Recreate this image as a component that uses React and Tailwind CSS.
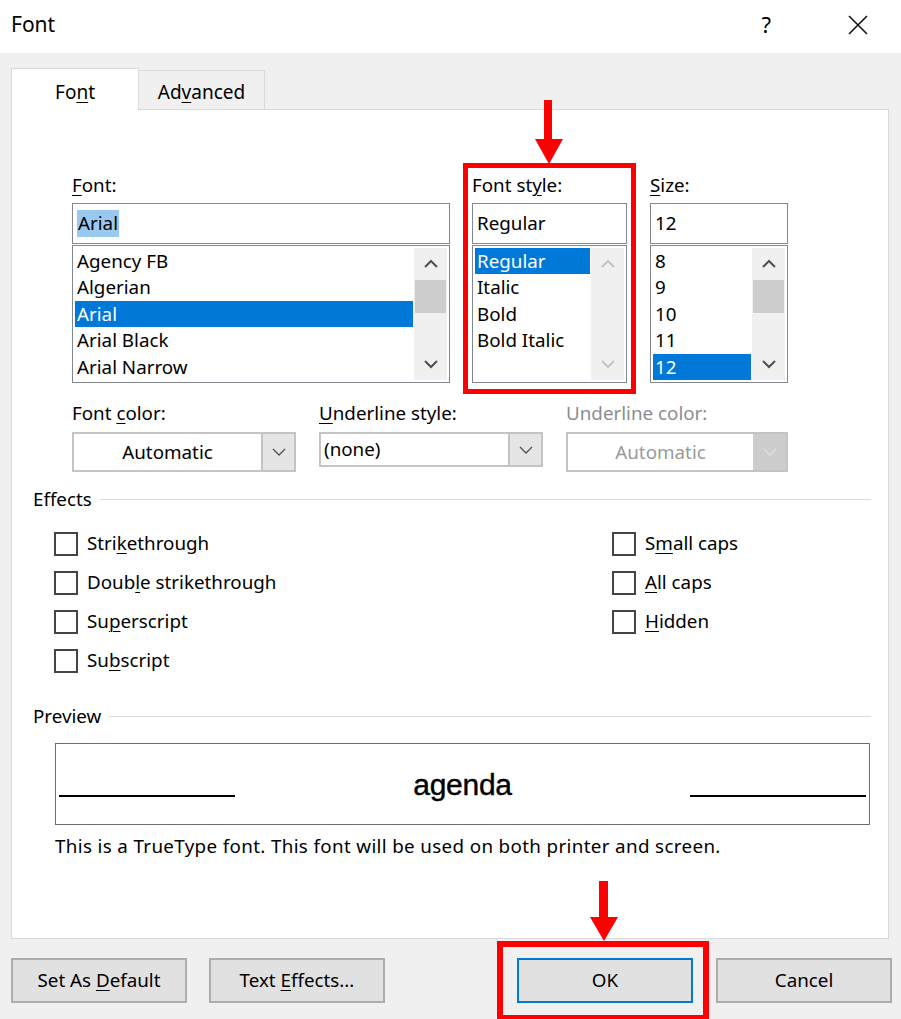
import React from "react";

const U = ({ children }) => (
  <span className="underline decoration-1 underline-offset-[3px]">{children}</span>
);

const ChevUp = ({ color = "#606060" }) => (
  <svg width="16" height="10" viewBox="0 0 16 10">
    <path d="M2 8 L8 2 L14 8" fill="none" stroke={color} strokeWidth="2" />
  </svg>
);
const ChevDown = ({ color = "#606060" }) => (
  <svg width="16" height="10" viewBox="0 0 16 10">
    <path d="M2 2 L8 8 L14 2" fill="none" stroke={color} strokeWidth="2" />
  </svg>
);
const SmallChev = ({ color = "#505050" }) => (
  <svg width="14" height="8" viewBox="0 0 14 8">
    <path d="M1 1 L7 7 L13 1" fill="none" stroke={color} strokeWidth="1.3" />
  </svg>
);

function ListBox({ width, items, selected, disabled, thumb }) {
  return (
    <div
      className="mt-[1px] h-[138px] border border-[#828790] bg-white p-[2px] flex"
      style={{ width }}
    >
      <div className="flex-1 flex flex-col">
        {items.map((it, i) => (
          <div
            key={it}
            className={
              "h-[26.4px] leading-[26px] pl-[2px] " +
              (i === selected ? "bg-[#0078d7] text-white" : "text-black")
            }
          >
            {it}
          </div>
        ))}
      </div>
      <div className="w-[33px] ml-[1px] bg-[#f0f0f0] flex flex-col">
        <div className="h-[32px] flex items-center justify-center">
          <ChevUp color={disabled ? "#c4c4c4" : "#505050"} />
        </div>
        {thumb && <div className="h-[33px] mx-[1px] bg-[#cdcdcd]" />}
        <div className="flex-1" />
        <div className="h-[32px] flex items-center justify-center">
          <ChevDown color={disabled ? "#c4c4c4" : "#505050"} />
        </div>
      </div>
    </div>
  );
}

function TextBox({ width, children }) {
  return (
    <div
      className="h-[41px] border border-[#828790] bg-white flex items-center pl-[4px]"
      style={{ width }}
    >
      <span>{children}</span>
    </div>
  );
}

function Check({ children }) {
  return (
    <div className="h-[39px] flex items-center">
      <div className="w-[24px] h-[24px] border-2 border-[#444] bg-white" />
      <span className="ml-[9px]">{children}</span>
    </div>
  );
}

function Button({ children, primary }) {
  return (
    <div
      className={
        "w-[176px] h-[45px] flex items-center justify-center bg-[#e1e1e1] " +
        (primary ? "border-2 border-[#0078d7]" : "border-2 border-[#adadad]")
      }
    >
      <span>{children}</span>
    </div>
  );
}

export default function App() {
  return (
    <div
      className="relative w-[901px] h-[1019px] bg-[#f0f0f0] text-[18.8px] text-black overflow-hidden"
      style={{ fontFamily: '"Noto Sans", "Open Sans", sans-serif' }}
    >
      {/* Title bar */}
      <div className="h-[53px] bg-white flex items-center pl-[11px] pb-[4px]">
        <span className="text-[21px]">Font</span>
        <div className="flex-1" />
        <span className="text-[22px] mr-[77px]">?</span>
        <svg width="20" height="20" viewBox="0 0 20 20" className="mr-[33px]">
          <path d="M1 1 L19 19 M19 1 L1 19" stroke="#111" strokeWidth="1.6" />
        </svg>
      </div>

      {/* Tabs */}
      <div className="pt-[15px] pl-[11px] flex items-end">
        <div className="relative z-10 w-[128px] h-[42px] -mb-px pt-[5px] bg-white border border-b-0 border-[#d9d9d9] flex items-center justify-center text-[19px]">
          <span>
            Fo<U>n</U>t
          </span>
        </div>
        <div className="w-[126px] h-[39px] pt-[5px] bg-[#f0f0f0] border border-b-0 border-l-0 border-[#d9d9d9] flex items-center justify-center text-[19px]">
          <span>
            Ad<U>v</U>anced
          </span>
        </div>
      </div>

      {/* Panel */}
      <div className="ml-[11px] w-[878px] h-[830px] bg-white border border-[#d9d9d9]">
        {/* Row 1 */}
        <div className="pt-[63px] pl-[60px] flex">
          <div className="w-[378px]">
            <div className="h-[24px] leading-[24px] mb-[6px]">
              <U>F</U>ont:
            </div>
            <TextBox width={378}>
              <span className="bg-[#99c9ef] leading-[27px] inline-block px-[1px]">Arial</span>
            </TextBox>
            <ListBox
              width={378}
              items={["Agency FB", "Algerian", "Arial", "Arial Black", "Arial Narrow"]}
              selected={2}
              thumb
            />
          </div>
          <div className="w-[155px] ml-[22px]">
            <div className="h-[24px] leading-[24px] mb-[6px]">
              Font st<U>y</U>le:
            </div>
            <TextBox width={155}>Regular</TextBox>
            <ListBox
              width={155}
              items={["Regular", "Italic", "Bold", "Bold Italic"]}
              selected={0}
              disabled
            />
          </div>
          <div className="w-[138px] ml-[23px]">
            <div className="h-[24px] leading-[24px] mb-[6px]">
              <U>S</U>ize:
            </div>
            <TextBox width={138}>12</TextBox>
            <ListBox
              width={138}
              items={["8", "9", "10", "11", "12"]}
              selected={4}
              thumb
            />
          </div>
        </div>

        {/* Row 2: dropdowns */}
        <div className="mt-[18px] pl-[60px] flex items-start">
          <div className="w-[224px]">
            <div className="h-[24px] leading-[24px] mb-[7px]">
              Font <U>c</U>olor:
            </div>
            <div className="h-[40px] border-2 border-[#c4c4c4] bg-white flex">
              <div className="flex-1 flex items-center justify-center">Automatic</div>
              <div className="w-[33px] bg-[#e5e5e5] border-l-2 border-[#c4c4c4] flex items-center justify-center">
                <SmallChev />
              </div>
            </div>
          </div>
          <div className="w-[224px] ml-[23px]">
            <div className="h-[24px] leading-[24px] mb-[7px]">
              <U>U</U>nderline style:
            </div>
            <div className="h-[35px] border-2 border-[#c4c4c4] bg-white flex">
              <div className="flex-1 flex items-center pl-[3px]">(none)</div>
              <div className="w-[33px] bg-[#e5e5e5] border-l-2 border-[#c4c4c4] flex items-center justify-center">
                <SmallChev />
              </div>
            </div>
          </div>
          <div className="w-[222px] ml-[23px]">
            <div className="h-[24px] leading-[24px] mb-[7px] text-[#8d8d8d]">
              Underline color:
            </div>
            <div className="h-[40px] border-2 border-[#c4c4c4] bg-white flex">
              <div className="flex-1 flex items-center justify-center text-[#9a9a9a]">
                Automatic
              </div>
              <div className="w-[33px] bg-[#cccccc] flex items-center justify-center">
                <SmallChev color="#e0e0e0" />
              </div>
            </div>
          </div>
        </div>

        {/* Effects */}
        <div className="mt-[15px] pl-[21px] pr-[17px] flex items-center h-[24px]">
          <span>Effects</span>
          <div className="flex-1 h-px bg-[#dcdcdc] ml-[8px]" />
        </div>
        <div className="mt-[13px] pl-[42px] flex">
          <div className="w-[558px] flex flex-col">
            <Check>
              Stri<U>k</U>ethrough
            </Check>
            <Check>
              Doub<U>l</U>e strikethrough
            </Check>
            <Check>
              Su<U>p</U>erscript
            </Check>
            <Check>
              Su<U>b</U>script
            </Check>
          </div>
          <div className="flex flex-col">
            <Check>
              S<U>m</U>all caps
            </Check>
            <Check>
              <U>A</U>ll caps
            </Check>
            <Check>
              <U>H</U>idden
            </Check>
          </div>
        </div>

        {/* Preview */}
        <div className="mt-[24px] pl-[21px] pr-[17px] flex items-center h-[24px]">
          <span>Preview</span>
          <div className="flex-1 h-px bg-[#dcdcdc] ml-[8px]" />
        </div>
        <div className="mt-[15px] ml-[43px] w-[815px] h-[82px] border border-[#6e6e6e] bg-white flex items-center px-[3px]">
          <div className="w-[176px] h-[2px] bg-black mt-[24px]" />
          <div
            className="flex-1 text-center text-[30px] tracking-[-0.3px] [-webkit-text-stroke:0.4px_black]"
            style={{ fontFamily: '"Liberation Sans", Arial, sans-serif' }}
          >
            agenda
          </div>
          <div className="w-[176px] h-[2px] bg-black mt-[24px]" />
        </div>
        <div className="mt-[9px] ml-[43px] h-[24px] leading-[24px] tracking-[0.35px]">
          This is a TrueType font. This font will be used on both printer and screen.
        </div>
      </div>

      {/* Buttons */}
      <div className="mt-[19px] pl-[11px] flex">
        <Button>
          Set As <U>D</U>efault
        </Button>
        <div className="ml-[22px]">
          <Button>
            Text <U>E</U>ffects...
          </Button>
        </div>
        <div className="ml-[132px]">
          <Button primary>OK</Button>
        </div>
        <div className="ml-[23px]">
          <Button>Cancel</Button>
        </div>
      </div>

      {/* Red annotations */}
      <div className="absolute left-[463px] top-[163px] w-[173px] h-[231px] border-[5px] border-[#ff0000]" />
      <div className="absolute left-[544px] top-[100px] w-[8px] h-[42px] bg-[#ff0000]" />
      <svg className="absolute left-[535px] top-[139px]" width="28" height="25" viewBox="0 0 28 25">
        <path d="M0 0 L28 0 L14 25 Z" fill="#ff0000" />
      </svg>
      <div className="absolute left-[497px] top-[941px] w-[212px] h-[80px] border-[6px] border-[#ff0000]" />
      <div className="absolute left-[599px] top-[881px] w-[9px] h-[38px] bg-[#ff0000]" />
      <svg className="absolute left-[590px] top-[917px]" width="28" height="24" viewBox="0 0 28 24">
        <path d="M0 0 L28 0 L14 24 Z" fill="#ff0000" />
      </svg>
    </div>
  );
}
